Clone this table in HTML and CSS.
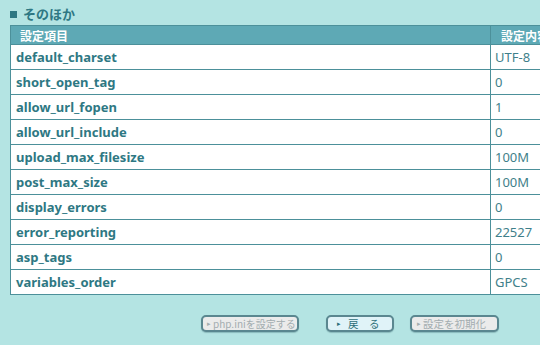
FILE: index.html
```html
<!DOCTYPE html>
<html lang="ja">
<head>
<meta charset="utf-8">
<link rel="stylesheet" href="styles.css">
</head>
<body>
<div class="page">
  <h2 class="title"><span class="sq"></span>そのほか</h2>
  <table class="settings">
    <thead>
      <tr><th class="k">設定項目</th><th class="v">設定内容</th></tr>
    </thead>
    <tbody>
      <tr><td class="k">default_charset</td><td class="v">UTF-8</td></tr>
      <tr><td class="k">short_open_tag</td><td class="v">0</td></tr>
      <tr><td class="k">allow_url_fopen</td><td class="v">1</td></tr>
      <tr><td class="k">allow_url_include</td><td class="v">0</td></tr>
      <tr><td class="k">upload_max_filesize</td><td class="v">100M</td></tr>
      <tr><td class="k">post_max_size</td><td class="v">100M</td></tr>
      <tr><td class="k">display_errors</td><td class="v">0</td></tr>
      <tr><td class="k">error_reporting</td><td class="v">22527</td></tr>
      <tr><td class="k">asp_tags</td><td class="v">0</td></tr>
      <tr><td class="k">variables_order</td><td class="v">GPCS</td></tr>
    </tbody>
  </table>
  <div class="buttons">
    <span class="btn off b1"><span class="arr">▸</span>php.iniを設定する</span>
    <span class="btn on b2"><span class="arr">▸</span>戻　る</span>
    <span class="btn off b3"><span class="arr">▸</span>設定を初期化</span>
  </div>
</div>
</body>
</html>
```
FILE: styles.css
```css
html, body {
  margin: 0;
  padding: 0;
  background: #b4e4e3;
  overflow: hidden;
  width: 540px;
  height: 345px;
}
.page {
  padding: 7px 0 0 10px;
  font-family: "Noto Sans", "Noto Sans CJK JP", sans-serif;
  color: #2e7883;
}
.title {
  margin: 0 0 4px 0;
  font-size: 13px;
  font-weight: bold;
  line-height: 14px;
  height: 14px;
  display: flex;
  align-items: center;
  font-family: "Noto Sans CJK JP", sans-serif;
}
.sq {
  display: inline-block;
  width: 7px;
  height: 7px;
  background: #2e7883;
  margin-right: 6px;
}
.settings {
  border-collapse: collapse;
  width: 570px;
  table-layout: fixed;
  background: #fff;
}
.settings th, .settings td {
  border: 1px solid #4c909a;
  text-align: left;
  padding: 0 0 0 5px;
  white-space: nowrap;
}
.settings th {
  background: #5ea9b5;
  color: #fff;
  font-family: "Noto Sans CJK JP", sans-serif;
  font-size: 12px;
  font-weight: bold;
  height: 18px;
  padding-left: 9px;
}
.settings th.v { padding-left: 10px; }
.settings th.k, .settings td.k { width: 470px; }
.settings td {
  height: 24px;
}
.settings td.k {
  font-size: 13px;
  font-weight: bold;
}
.settings td.v {
  font-size: 13px;
  color: #3f7f8a;
  padding-left: 4px;
}
.buttons {
  display: flex;
  margin-top: 20px;
  padding-left: 191px;
  font-family: "Noto Sans CJK JP", sans-serif;
}
.btn {
  box-sizing: border-box;
  height: 17px;
  border: 2px solid #5a8790;
  border-radius: 5px;
  font-size: 10.5px;
  line-height: 13px;
  padding-left: 5px;
  display: flex;
  align-items: center;
  white-space: nowrap;
  overflow: hidden;
  box-shadow: 0 1px 1px rgba(40, 90, 100, 0.3);
}
.btn .arr { font-size: 7px; margin-right: 2px; }
.btn.off {
  background: #ebebeb;
  color: #a3adb0;
}
.btn.on {
  background: #e0f3f8;
  color: #2e6f7a;
  padding-left: 9px;
}
.b1 { width: 98px; padding-left: 4px; font-size: 10px; }
.b2 { width: 68px; margin-left: 27px; }
.b3 { width: 89px; margin-left: 16px; }
.b2 .arr { margin-right: 7px; }
```
